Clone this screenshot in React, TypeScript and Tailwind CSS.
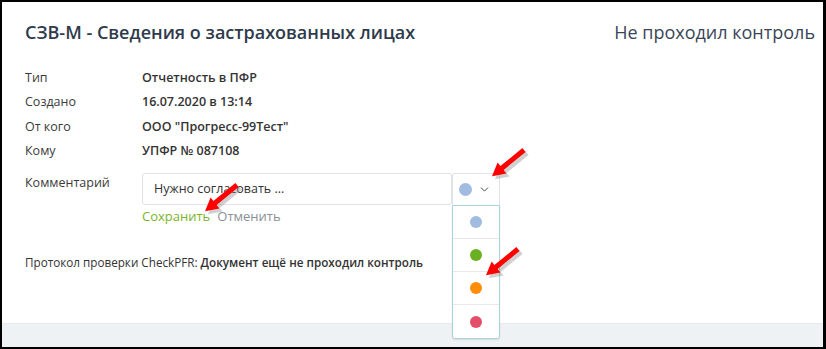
import { ChevronDown } from 'lucide-react';

const rows = [
  { label: 'Тип', value: 'Отчетность в ПФР' },
  { label: 'Создано', value: '16.07.2020 в 13:14' },
  { label: 'От кого', value: 'ООО "Прогресс-99Тест"' },
  { label: 'Кому', value: 'УПФР № 087108' },
];

const colors = ['#a0bce0', '#6bb022', '#ff8c0a', '#e34f68'];

const arrowPath = 'M1 29.2 L6.6 15.6 L9.4 19.1 L31.4 1.1 L34.6 4.9 L12.6 22.9 L15.4 26.4 Z';

function Arrow({ x, y }: { x: number; y: number }) {
  // red pointer, tip at bottom-left
  return (
    <svg
      className="absolute pointer-events-none"
      style={{ left: x, top: y }}
      width="42"
      height="36"
      viewBox="0 0 42 36"
    >
      <path d={arrowPath} transform="translate(3 3)" fill="#8a8a8a" opacity="0.4" />
      <path d={arrowPath} fill="#ff0000" />
    </svg>
  );
}

export default function App() {
  return (
    <div
      className="w-[826px] h-[349px] bg-black pt-[2px] pl-[2px] pr-[3px] pb-[2px]"
      style={{ fontFamily: '"Open Sans", "Liberation Sans", sans-serif' }}
    >
      <div className="relative flex h-full flex-col bg-white">
        <div className="flex-1 pl-[23px] pr-[8px] pt-[18px]">
          <div className="flex items-center justify-between">
            <h1 className="text-[18px] leading-[24px] font-semibold text-[#2f3b4b]">
              СЗВ-М - Сведения о застрахованных лицах
            </h1>
            <div className="text-[18px] leading-[24px] text-[#3a4657]">Не проходил контроль</div>
          </div>

          <div className="mt-[22px] flex flex-col">
            {rows.map((r) => (
              <div key={r.label} className="flex h-[24.5px] items-center text-[12.5px] text-[#3b3b3b]">
                <div className="w-[117px]">{r.label}</div>
                <div className="font-semibold text-[#333]">{r.value}</div>
              </div>
            ))}
          </div>

          <div className="mt-[9px] flex">
            <div className="w-[117px] pt-[1px] text-[12.5px] leading-[18px] text-[#3b3b3b]">Комментарий</div>
            <div>
              <div className="flex">
                <div className="flex h-[32px] w-[310px] items-center rounded-[3px] border border-[#dfe3e7] pl-[11px] text-[12.5px] text-[#333]">
                  Нужно согласовать ...
                </div>
                <div className="relative w-[48px]">
                  <div className="flex h-[32px] items-center justify-center gap-[6px] rounded-t-[3px] border border-b-0 border-[#dfe3e7] pr-[2px]">
                    <span className="h-[13px] w-[13px] rounded-full bg-[#a0bce0]" />
                    <ChevronDown className="h-[13px] w-[13px] text-[#3a4657]" strokeWidth={1.8} />
                  </div>
                  <div className="absolute left-0 top-[32px] w-[48px] rounded-b-[3px] border border-[#a9d2dd] bg-white shadow-[0_1px_2px_rgba(0,0,0,0.1)]">
                    {colors.map((c, i) => (
                      <div
                        key={c}
                        className={
                          'flex h-[33px] items-center justify-center' +
                          (i < colors.length - 1 ? ' border-b border-[#e6e9ec]' : '')
                        }
                      >
                        <span className="h-[12px] w-[12px] rounded-full" style={{ backgroundColor: c }} />
                      </div>
                    ))}
                  </div>
                </div>
              </div>
              <div className="mt-[2px] flex gap-[7px] text-[13px] leading-[18px]">
                <span className="text-[#7ab52d]">Сохранить</span>
                <span className="text-[#8a8f96]">Отменить</span>
              </div>
            </div>
          </div>

          <div className="mt-[29px] text-[11.7px] text-[#333]">
            Протокол проверки CheckPFR: <span className="font-semibold">Документ ещё не проходил контроль</span>
          </div>
        </div>
        <div className="h-[24px] border-t border-[#e7ebef] bg-[#eff2f5]" />

        <Arrow x={489} y={145} />
        <Arrow x={202} y={180} />
        <Arrow x={483} y={244} />
      </div>
    </div>
  );
}
